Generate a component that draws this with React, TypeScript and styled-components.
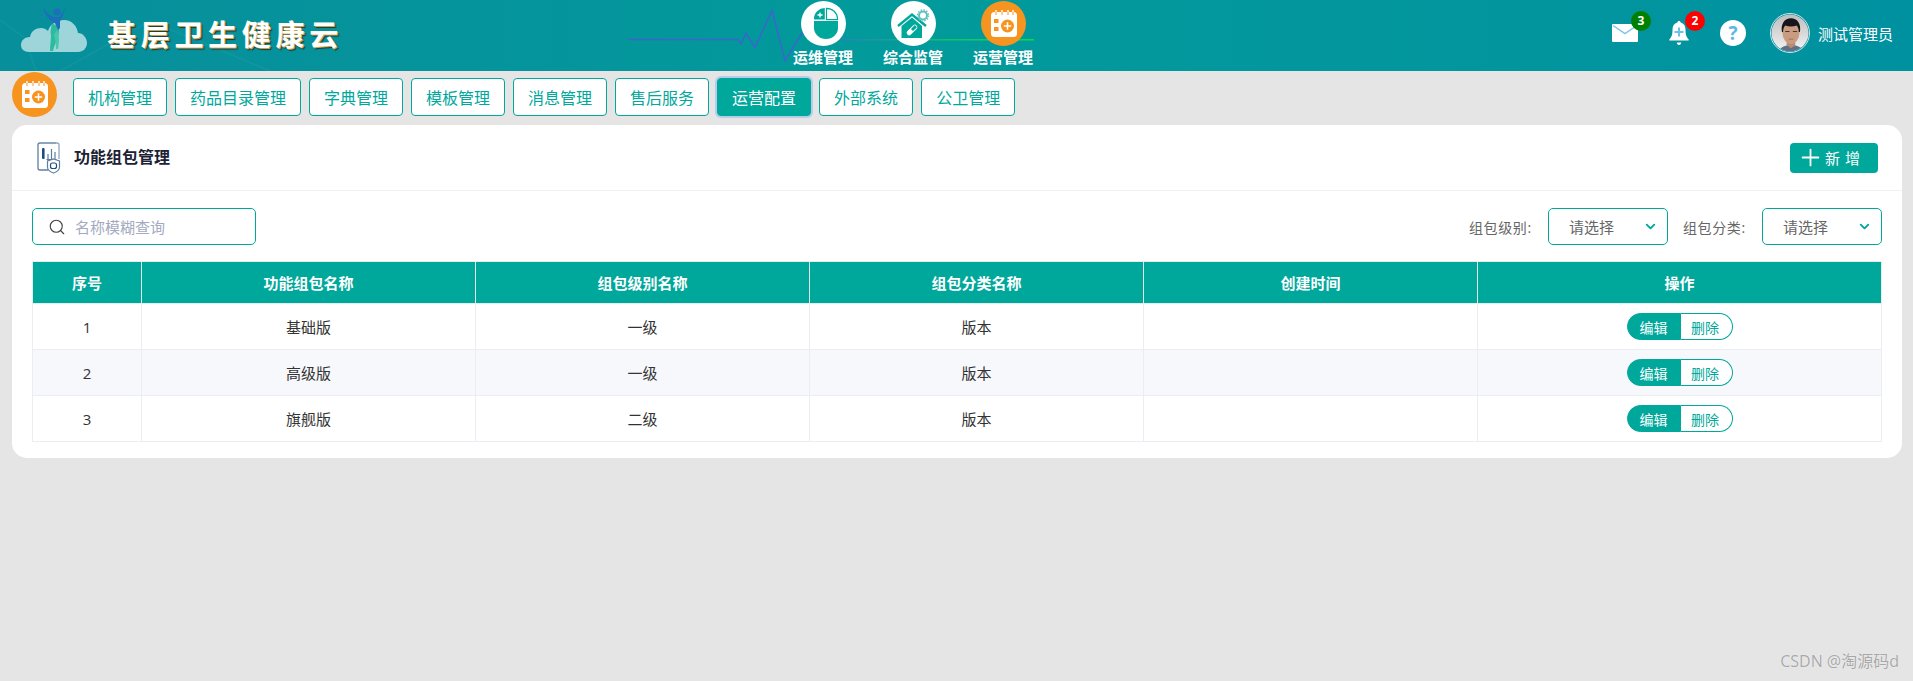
import styled, { createGlobalStyle } from 'styled-components';
import { ChevronDown, Plus, Search } from 'lucide-react';

const teal = '#00a89c';

const GlobalStyle = createGlobalStyle`
  html, body {
    margin: 0;
    height: 100%;
    background: #e5e5e5;
    font-family: "Open Sans", "Noto Sans CJK SC", sans-serif;
    overflow: hidden;
  }
  * { box-sizing: border-box; }
`;

const tabs = ['机构管理', '药品目录管理', '字典管理', '模板管理', '消息管理', '售后服务', '运营配置', '外部系统', '公卫管理'];
const rows = [
  { id: 1, name: '基础版', level: '一级', type: '版本' },
  { id: 2, name: '高级版', level: '一级', type: '版本' },
  { id: 3, name: '旗舰版', level: '二级', type: '版本' },
];

function LogoMark() {
  return (
    <svg width="68" height="52" viewBox="20 0 68 52">
      <path d="M29 52c-5 0-8-3-8-7 0-5 4-8 9-8 1-6 6-9 11-9 3 0 5 1 7 3 2-7 9-11 16-11 8 0 13 6 14 13 5 0 9 5 9 10s-4 9-9 9z" fill="#9dd5da" />
      <path d="M52 24c4 0 7 3 7 7 0 6-4 12-6 20h-3c0-6 1-10 1-15-1-4 0-8 1-12z" fill="#2dbb9f" />
      <path d="M57 30c3 6 2 13 1 19h-2c0-6-1-10-2-14z" fill="#45c8ab" />
      <path d="M43 7c3 5 7 9 11 10h5c2-2 4-5 6-9-1 6-3 11-5 13l0 7-2 2-3-7c-6-3-11-9-12-16z" fill="#1d6fbb" />
      <circle cx="57" cy="12" r="3.600" fill="#1d6fbb" />
    </svg>
  );
}

function MouseIcon() {
  return (
    <svg width="45" height="45" viewBox="0 0 45 45">
      <circle cx="22.500" cy="22.500" r="22.500" fill="#fff" />
      <path d="M13 20h24v7a12 11 0 0 1-24 0z" fill={teal} />
      <path d="M13 18.600v-1A11 10.600 0 0 1 23.800 7v11.600z" fill={teal} />
      <path d="M25.500 7.300A11 10.600 0 0 1 36.500 17.600v1H25.500z" fill="none" stroke={teal} strokeWidth="1.200" />
      <path d="M16.500 14h5M19 11.500v5" stroke="#fff" strokeWidth="1.300" />
    </svg>
  );
}

function HouseIcon() {
  return (
    <svg width="45" height="45" viewBox="0 0 45 45">
      <circle cx="22.500" cy="22.500" r="22.500" fill="#fff" />
      <path d="M7 25l14-11.500L35 25" fill="none" stroke={teal} strokeWidth="2.400" />
      <path d="M10.500 25L21 16.500 31 25v12H10.500z" fill={teal} />
      <g transform="rotate(-45 21 29)">
        <rect x="14.500" y="26.500" width="13" height="5" rx="2.500" fill="#fff" />
        <rect x="21" y="27.500" width="5.500" height="3" fill={teal} />
      </g>
      <circle cx="32" cy="14.500" r="4" fill="none" stroke="#5fc0bf" strokeWidth="2" />
      <circle cx="32" cy="14.500" r="5.600" fill="none" stroke="#5fc0bf" strokeWidth="1.300" strokeDasharray="1.500 1.400" />
    </svg>
  );
}

function CalendarIcon() {
  return (
    <svg width="45" height="45" viewBox="0 0 45 45">
      <circle cx="22.500" cy="22.500" r="22.500" fill="#f79420" />
      <rect x="10" y="11" width="26" height="25" rx="3.500" fill="#fff" />
      <path d="M15 9v5M21 9v5M27 9v5M32 9v5" stroke="#fff" strokeWidth="1.400" />
      <path d="M15 11v3M21 11v3M27 11v3M32 11v3" stroke="#f79420" strokeWidth="1" />
      <rect x="13" y="18" width="4.500" height="4" fill="#f79420" />
      <rect x="13" y="26" width="4.500" height="4" fill="#f79420" />
      <circle cx="26.500" cy="25" r="6.500" fill="#f79420" />
      <path d="M22.800 25h7.400M26.500 21.300v7.400" stroke="#fff" strokeWidth="1.500" />
    </svg>
  );
}

function MailIcon() {
  return (
    <svg width="26" height="18" viewBox="0 0 26 18">
      <rect width="26" height="18" rx="1" fill="#fff" />
      <path d="M1 1.500l12 8 12-8" fill="none" stroke="#7cc6ea" strokeWidth="1.500" />
    </svg>
  );
}

function BellIcon() {
  return (
    <svg width="20" height="26" viewBox="0 0 20 26">
      <path d="M10 1c1 0 1.600.6 1.700 1.500C15 3.500 16.500 6 16.500 9.500c0 5 .8 7.500 3.200 10v1H.3v-1c2.400-2.500 3.200-5 3.200-10C3.500 6 5 3.500 8.300 2.500 8.400 1.600 9 1 10 1z" fill="#fff" />
      <path d="M7.800 22.500h4.400c0 1.500-1 2.500-2.200 2.500s-2.200-1-2.200-2.500z" fill="#fff" />
      <path d="M5.500 12h9M10 7.500v9" stroke="#6fc0e8" strokeWidth="2" />
    </svg>
  );
}

function AvatarPortrait() {
  return (
    <svg width="40" height="40" viewBox="0 0 40 40">
      <defs>
        <linearGradient id="avatarBg" x1="0" y1="0" x2="0" y2="1">
          <stop offset="0" stopColor="#bdbdbd" />
          <stop offset="1" stopColor="#f4f4f4" />
        </linearGradient>
        <clipPath id="avatarClip">
          <circle cx="20" cy="20" r="19.500" />
        </clipPath>
      </defs>
      <g clipPath="url(#avatarClip)">
        <rect width="40" height="40" fill="url(#avatarBg)" />
        <path d="M8 40c1-4 5-6 9-7h8c5 1 8 3 9 7z" fill="#5f7088" />
        <path d="M16.500 27h9v6l-4.500 3-4.500-3z" fill="#b98c72" />
        <ellipse cx="21" cy="19.500" rx="9" ry="12" fill="#c99b80" />
        <path d="M11.500 19c-1.500-9 3-14.500 9.500-14.500S32 10 30.500 19l-1.200 0c0-3-.8-5.500-2.300-7-3.500 1.500-8.500 1.500-12 0-1.500 1.500-2.300 4-2.300 7z" fill="#17151a" />
        <path d="M15 18.500h4.500M23 18.500h4.500" stroke="#4a3632" strokeWidth="1.100" />
        <path d="M18.500 26.500h5" stroke="#9a6c5a" strokeWidth="0.900" />
      </g>
    </svg>
  );
}

function ModuleIcon() {
  return (
    <svg width="26" height="32" viewBox="0 0 26 32">
      <path d="M19 1H3a2 2 0 0 0-2 2v23a2 2 0 0 0 2 2h8" fill="none" stroke="#5f7f9f" strokeWidth="1.300" />
      <path d="M3 1h17a2 2 0 0 1 2 2v14" fill="none" stroke="#8fa7bf" strokeWidth="1.300" />
      <rect x="5" y="6" width="2.600" height="11" rx="1" fill="#1f4e79" />
      <path d="M11 17v-5M14.500 17V7M18 17v-7M9.500 17.500h10" stroke="#5f7f9f" strokeWidth="1.200" fill="none" />
      <path d="M16.500 17l6 2v6c0 3-3 5-6 6-3-1-6-3-6-6v-6z" fill="#fff" stroke="#5f7f9f" strokeWidth="1.200" />
      <rect x="13.500" y="21" width="6" height="5.500" rx="2" fill="none" stroke="#1f4e79" strokeWidth="1.200" />
    </svg>
  );
}

export default function App() {
  return (
    <Page>
      <GlobalStyle />
      <Header>
        <HeaderTexture viewBox="0 0 1913 71" preserveAspectRatio="none">
          <defs>
            <linearGradient id="pulseTail" x1="840" y1="0" x2="1034" y2="0" gradientUnits="userSpaceOnUse">
              <stop offset="0" stopColor="#2a7fc0" />
              <stop offset="0.55" stopColor="#0fc46a" />
              <stop offset="1" stopColor="#0bdc45" />
            </linearGradient>
          </defs>
          <path d="M0 20l25 18 20 60M60 71l90-50 120 50" fill="none" stroke="#fff" strokeOpacity="0.04" strokeWidth="2" />
          <path d="M628 39.500H738l3 4 5-10 9 14 17-37 13 50 18-29" fill="none" stroke="#3b66cc" strokeWidth="1.500" />
          <rect x="840" y="39" width="194" height="1.500" fill="url(#pulseTail)" />
        </HeaderTexture>
        <Brand>
          <LogoMark />
          <BrandName>基层卫生健康云</BrandName>
        </Brand>
        <MainNav>
          <NavItem>
            <MouseIcon />
            <NavLabel>运维管理</NavLabel>
          </NavItem>
          <NavItem>
            <HouseIcon />
            <NavLabel>综合监管</NavLabel>
          </NavItem>
          <NavItem>
            <CalendarIcon />
            <NavLabel>运营管理</NavLabel>
          </NavItem>
        </MainNav>
        <UserArea>
          <IconSlot>
            <MailIcon />
            <Badge $color="#008000" $left={33}>3</Badge>
          </IconSlot>
          <IconSlot>
            <BellIcon />
            <Badge $color="#ff0000" $left={33}>2</Badge>
          </IconSlot>
          <IconSlot>
            <HelpDot>?</HelpDot>
          </IconSlot>
          <Avatar>
            <AvatarPortrait />
          </Avatar>
          <UserName>测试管理员</UserName>
        </UserArea>
      </Header>

      <SubBar>
        <CalendarIcon />
        <TabList>
          {tabs.map((t) => (
            <Tab key={t} $active={t === '运营配置'}>{t}</Tab>
          ))}
        </TabList>
      </SubBar>

      <Card>
        <CardHead>
          <CardTitle>
            <ModuleIcon />
            <TitleText>功能组包管理</TitleText>
          </CardTitle>
          <AddButton>
            <Plus size={27} strokeWidth={1.6} />
            <span>新增</span>
          </AddButton>
        </CardHead>

        <Toolbar>
          <SearchBox>
            <Search size={18} color="#444" strokeWidth={1.5} />
            <SearchInput placeholder="名称模糊查询" />
          </SearchBox>
          <Filters>
            <FilterLabel>组包级别:</FilterLabel>
            <SelectBox>
              请选择
              <ChevronDown size={15} color={teal} strokeWidth={3} />
            </SelectBox>
            <FilterLabel>组包分类:</FilterLabel>
            <SelectBox>
              请选择
              <ChevronDown size={15} color={teal} strokeWidth={3} />
            </SelectBox>
          </Filters>
        </Toolbar>

        <TableWrap>
          <Table>
            <colgroup>
              <col style={{ width: 109 }} />
              <col />
              <col />
              <col />
              <col />
              <col style={{ width: 404 }} />
            </colgroup>
            <thead>
              <tr>
                <Th>序号</Th>
                <Th>功能组包名称</Th>
                <Th>组包级别名称</Th>
                <Th>组包分类名称</Th>
                <Th>创建时间</Th>
                <Th>操作</Th>
              </tr>
            </thead>
            <tbody>
              {rows.map((r) => (
                <Row key={r.id} $striped={r.id === 2}>
                  <Td>{r.id}</Td>
                  <Td>{r.name}</Td>
                  <Td>{r.level}</Td>
                  <Td>{r.type}</Td>
                  <Td />
                  <Td>
                    <ActionPill>
                      <EditButton>编辑</EditButton>
                      <DeleteButton>删除</DeleteButton>
                    </ActionPill>
                  </Td>
                </Row>
              ))}
            </tbody>
          </Table>
        </TableWrap>
      </Card>

      <Watermark>CSDN @淘源码d</Watermark>
    </Page>
  );
}

const Page = styled.div`
  position: relative;
  height: 100vh;
  background: #e5e5e5;
`;

const Header = styled.header`
  position: relative;
  height: 71px;
  display: grid;
  grid-template-columns: 778px 270px 1fr;
  background: linear-gradient(90deg, #078f9b 0%, #05949c 25%, #029a9b 45%, #03979d 70%, #0091a0 100%);
  overflow: hidden;
`;

const HeaderTexture = styled.svg`
  position: absolute;
  inset: 0;
  width: 100%;
  height: 100%;
`;

const Brand = styled.div`
  position: relative;
  display: flex;
  align-items: flex-start;
  padding-left: 20px;
`;

const BrandName = styled.h1`
  margin: 13px 0 0 19px;
  font-size: 29px;
  line-height: 40px;
  font-weight: 700;
  letter-spacing: 4.7px;
  color: #fff;
  font-family: "Noto Sans CJK SC", sans-serif;
  text-shadow: 1px 1px 0 #c9a24a, 2px 2px 1px #1c3a3c;
`;

const MainNav = styled.nav`
  position: relative;
  display: flex;
`;

const NavItem = styled.div`
  width: 90px;
  padding-top: 1px;
  display: flex;
  flex-direction: column;
  align-items: center;
`;

const NavLabel = styled.span`
  font-size: 15px;
  line-height: 22px;
  font-weight: 700;
  color: #fff;
`;

const UserArea = styled.div`
  position: relative;
  display: flex;
  justify-content: flex-end;
  align-items: center;
  padding: 0 20px 5px 0;
`;

const IconSlot = styled.div`
  position: relative;
  width: 54px;
  height: 30px;
  display: flex;
  align-items: center;
  justify-content: center;
`;

const Badge = styled.span<{ $color: string; $left: number }>`
  position: absolute;
  top: -7px;
  left: ${(p) => p.$left}px;
  width: 20px;
  height: 20px;
  border-radius: 50%;
  background: ${(p) => p.$color};
  color: #fff;
  font-size: 12px;
  font-weight: 700;
  line-height: 20px;
  text-align: center;
`;

const HelpDot = styled.span`
  width: 26px;
  height: 26px;
  border-radius: 50%;
  background: #fff;
  color: #5db8e6;
  font-size: 19px;
  font-weight: 700;
  line-height: 26px;
  text-align: center;
`;

const Avatar = styled.div`
  width: 40px;
  height: 40px;
  margin-left: 10px;
  border-radius: 50%;
  border: 1px solid #cfe5e8;
  overflow: hidden;
  display: flex;
  align-items: center;
  justify-content: center;
  flex-shrink: 0;
`;

const UserName = styled.span`
  margin-left: 8px;
  font-size: 15px;
  color: #fff;
  white-space: nowrap;
`;

const SubBar = styled.div`
  height: 54px;
  padding: 1px 0 0 12px;
  display: flex;
  align-items: flex-start;
  gap: 16px;
`;

const TabList = styled.div`
  display: flex;
  gap: 8px;
  padding-top: 6px;
`;

const Tab = styled.button<{ $active?: boolean }>`
  height: 38px;
  padding: 0 14px;
  border: 1px solid ${teal};
  border-radius: 4px;
  background: ${(p) => (p.$active ? teal : '#fff')};
  color: ${(p) => (p.$active ? '#fff' : teal)};
  font-family: inherit;
  font-size: 16px;
  white-space: nowrap;
  box-shadow: ${(p) => (p.$active ? '0 0 0 2px #b4cdea' : 'none')};
`;

const Card = styled.section`
  margin: 0 11px 0 12px;
  background: #fff;
  border-radius: 15px;
  padding-bottom: 16px;
`;

const CardHead = styled.div`
  height: 66px;
  padding: 0 24px 0 25px;
  display: flex;
  align-items: center;
  justify-content: space-between;
  border-bottom: 1px solid #eff0f3;
`;

const CardTitle = styled.div`
  display: flex;
  align-items: center;
  gap: 11px;
`;

const TitleText = styled.span`
  margin-top: -3px;
  font-size: 16px;
  font-weight: 600;
  color: #1b2233;
`;

const AddButton = styled.button`
  width: 88px;
  height: 30px;
  padding: 0 0 0 7px;
  border: none;
  border-radius: 4px;
  background: ${teal};
  color: #fff;
  font-family: inherit;
  font-size: 15px;
  letter-spacing: 5px;
  display: flex;
  align-items: center;
  gap: 1px;
`;

const Toolbar = styled.div`
  padding: 17px 20px 16px;
  display: flex;
  align-items: center;
  justify-content: space-between;
`;

const SearchBox = styled.div`
  width: 224px;
  height: 37px;
  padding-left: 15px;
  border: 1px solid ${teal};
  border-radius: 5px;
  display: flex;
  align-items: center;
  gap: 9px;
`;

const SearchInput = styled.input`
  flex: 1;
  min-width: 0;
  border: 0;
  outline: 0;
  padding: 0;
  background: none;
  font-family: inherit;
  font-size: 15px;
  color: #333;

  &::placeholder {
    color: #a3aabf;
  }
`;

const Filters = styled.div`
  display: flex;
  align-items: center;
`;

const FilterLabel = styled.span`
  width: 79px;
  margin-left: 15px;
  font-size: 14px;
  letter-spacing: 0.6px;
  color: #666;
  white-space: nowrap;
`;

const SelectBox = styled.div`
  width: 120px;
  height: 37px;
  padding: 0 9px 0 20px;
  border: 1px solid ${teal};
  border-radius: 5px;
  display: flex;
  align-items: center;
  justify-content: space-between;
  font-size: 15px;
  color: #666;
`;

const TableWrap = styled.div`
  padding: 0 20px;
`;

const Table = styled.table`
  width: 100%;
  table-layout: fixed;
  border-collapse: collapse;
`;

const Th = styled.th`
  height: 42px;
  padding: 0;
  background: ${teal};
  color: #fff;
  font-size: 15px;
  font-weight: 700;
  text-align: center;
  border: 1px solid #e4edec;
`;

const Row = styled.tr<{ $striped?: boolean }>`
  background: ${(p) => (p.$striped ? '#f7f8fc' : '#fff')};
`;

const Td = styled.td`
  height: 46px;
  padding: 0;
  border: 1px solid #ecedf3;
  font-size: 15px;
  color: #333;
  text-align: center;
`;

const ActionPill = styled.div`
  display: inline-flex;
  vertical-align: middle;
  height: 27px;
`;

const EditButton = styled.button`
  width: 54px;
  padding: 0;
  border: 1px solid ${teal};
  border-radius: 14px 0 0 14px;
  background: ${teal};
  color: #fff;
  font-family: inherit;
  font-size: 14px;
`;

const DeleteButton = styled.button`
  width: 52px;
  padding: 0 2px 0 0;
  border: 1px solid ${teal};
  border-left: 0;
  border-radius: 0 14px 14px 0;
  background: #fff;
  color: ${teal};
  font-family: inherit;
  font-size: 14px;
`;

const Watermark = styled.div`
  position: absolute;
  right: 14px;
  bottom: 9px;
  font-size: 16px;
  color: #a8a8a8;
  text-shadow: 0 0 1px #fff;
`;
